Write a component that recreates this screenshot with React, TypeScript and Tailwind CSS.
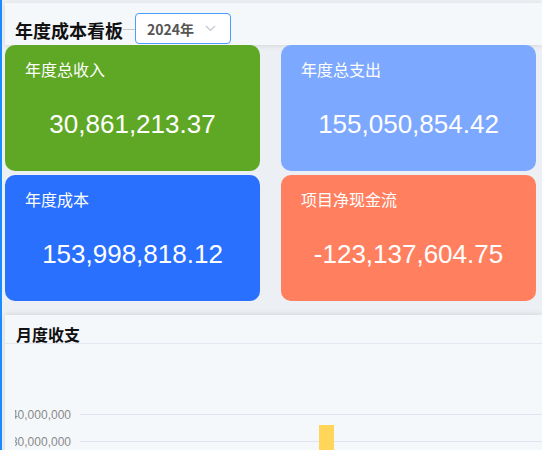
import React from "react";

const cards = [
  { title: "年度总收入", value: "30,861,213.37", bg: "bg-[#5fa825]" },
  { title: "年度总支出", value: "155,050,854.42", bg: "bg-[#7da8ff]" },
  { title: "年度成本", value: "153,998,818.12", bg: "bg-[#2970ff]" },
  { title: "项目净现金流", value: "-123,137,604.75", bg: "bg-[#ff7f5f]" },
];

const cjk = { fontFamily: '"Noto Sans CJK SC", "Noto Sans", sans-serif' };
const num = { fontFamily: '"Liberation Sans", Arial, sans-serif' };

function Chevron() {
  return (
    <svg width="11" height="7" viewBox="0 0 11 7" fill="none">
      <path d="M1 1l4.5 4.5L10 1" stroke="#c0c4cc" strokeWidth="1.1" />
    </svg>
  );
}

export default function App() {
  return (
    <div className="flex h-[450px] w-[542px] overflow-hidden bg-[#eceff3]" style={cjk}>
      <div className="w-[2px] shrink-0 bg-[#1a8cff]" />
      <div className="flex min-w-0 flex-1 flex-col pl-[3px] pt-[3px]">
        {/* header */}
        <div className="flex h-[42px] shrink-0 bg-[#f5f8fb] pb-[1px] pt-[10px] shadow-[0_1px_5px_rgba(0,0,0,0.1)]">
          <div className="mb-[2px] self-end pl-[10px] text-[18px] font-bold leading-[24px] text-[#111]">
            年度成本看板
          </div>
          <div className="mb-[14px] h-px w-[12px] self-end bg-[#c8c8c8]" />
          <div className="flex h-[31px] w-[96px] items-center justify-between rounded-[4px] border border-[#4a9cff] bg-white pl-[11px] pr-[14px]">
            <span className="text-[14px] font-bold leading-none text-[#555]">2024年</span>
            <Chevron />
          </div>
        </div>

        {/* summary cards */}
        <div className="grid shrink-0 grid-cols-2 gap-x-[21px] gap-y-[4px] pr-[6px]">
          {cards.map((c) => (
            <div key={c.title} className={`h-[126px] rounded-[10px] ${c.bg} pl-[20px] pt-[14px] text-white`}>
              <div className="text-[16px] leading-[20px]">{c.title}</div>
              <div className="mt-[30px] pr-[20px] text-center text-[26px] leading-[30px]" style={num}>
                {c.value}
              </div>
            </div>
          ))}
        </div>

        {/* monthly chart */}
        <div className="mt-[14px] flex-1 bg-[#f5f8fb] shadow-[0_-1px_5px_rgba(0,0,0,0.1)]">
          <div className="h-[29px] border-b border-[#e3e8f0] pl-[11px] pt-[10px] text-[16px] font-bold leading-[18px] text-[#111]">
            月度收支
          </div>
          <div className="relative pl-[10px] pt-[57px]" style={num}>
            {["40,000,000", "30,000,000"].map((v) => (
              <div key={v} className="flex h-[27px] items-center">
                <div className="flex w-[56px] shrink-0 justify-end overflow-hidden">
                  <span className="whitespace-nowrap text-[12px] leading-none text-[#8a8a8a]">{v}</span>
                </div>
                <div className="ml-[9px] h-px flex-1 bg-[#dfe4ef]" />
              </div>
            ))}
            <div className="absolute left-[314px] top-[81px] h-[40px] w-[15px] bg-[#ffd65a]" />
          </div>
        </div>
      </div>
    </div>
  );
}
